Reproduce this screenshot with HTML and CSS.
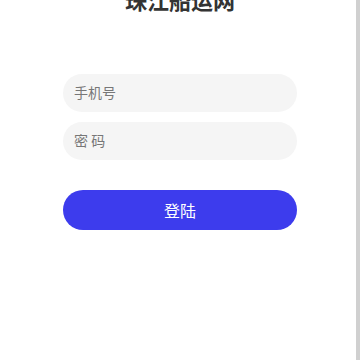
FILE: index.html
```html
<!DOCTYPE html>
<html lang="zh-CN">
<head>
    <meta charset="UTF-8">
    <meta name="viewport" content="width=device-width, initial-scale=1.0">
    <title>珠江船运网 - 登陆</title>
    <link rel="stylesheet" href="styles.css">
</head>
<body>

<div class="page">
    <div class="login">
        <div class="title">珠江船运网</div>
        <div class="fields">
            <input type="text" class="field" placeholder="手机号">
            <input type="password" class="field" placeholder="密 码">
        </div>
        <button class="login-btn">登陆</button>
    </div>
    <div class="side-bar"></div>
</div>

</body>
</html>
```

FILE: styles.css
```css
        html, body {
            margin: 0;
            padding: 0;
            height: 100%;
            background-color: #fff;
        }
        body {
            font-family: "Noto Sans CJK SC", "Noto Sans", sans-serif;
            overflow: hidden;
        }
        .page {
            display: flex;
            height: 100%;
        }
        .login {
            flex: 1;
            display: flex;
            flex-direction: column;
            width: 234px;
            padding-left: 63px;
            padding-right: 59px;
        }
        .title {
            margin-top: -16px;
            height: 30px;
            line-height: 30px;
            font-size: 22px;
            font-weight: bold;
            color: #333;
            text-align: center;
        }
        .fields {
            display: flex;
            flex-direction: column;
            gap: 10px;
            margin-top: 60px;
        }
        .field {
            box-sizing: border-box;
            width: 234px;
            height: 38px;
            border: none;
            outline: none;
            border-radius: 19px;
            background-color: #f5f5f5;
            padding: 0 11px 3px 11px;
            font-family: inherit;
            font-size: 14px;
            color: #333;
        }
        .field::placeholder {
            color: #777;
        }
        .login-btn {
            margin-top: 30px;
            width: 234px;
            height: 40px;
            border: none;
            border-radius: 20px;
            background-color: #3d3ced;
            color: #fff;
            font-family: inherit;
            font-size: 16px;
            cursor: pointer;
        }
        .side-bar {
            width: 4px;
            background-color: #d0d0d0;
        }
```
